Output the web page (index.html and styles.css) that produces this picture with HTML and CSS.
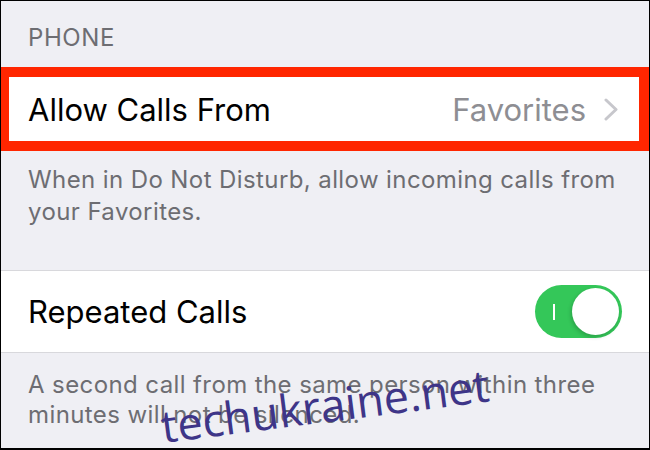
FILE: index.html
```html
<!DOCTYPE html>
<html>
<head>
<meta charset="utf-8">
<link rel="stylesheet" href="styles.css">
</head>
<body>
<div class="screen">
  <div class="section-header">PHONE</div>
  <div class="cell highlight">
    <span class="cell-title">Allow Calls From</span>
    <span class="cell-value">Favorites</span>
    <svg class="chevron" width="14" height="23" viewBox="0 0 14 23"><path d="M2 2 L12 11.5 L2 21" fill="none" stroke="#c7c7cc" stroke-width="3" stroke-linecap="round" stroke-linejoin="round"/></svg>
  </div>
  <div class="section-footer first">When in Do Not Disturb, allow incoming calls from your Favorites.</div>
  <div class="cell plain">
    <span class="cell-title">Repeated Calls</span>
    <div class="toggle on"><span class="toggle-mark"></span><span class="knob"></span></div>
  </div>
  <div class="section-footer second">A second call from the same person within three minutes will not be silenced.</div>
  <div class="watermark">techukraine.net</div>
</div>
</body>
</html>
```

FILE: styles.css
```css
html, body {
  margin: 0;
  padding: 0;
  background: #efeff4;
}
.screen {
  position: relative;
  width: 650px;
  height: 450px;
  box-sizing: border-box;
  border: 1px solid #000;
  border-bottom-width: 2px;
  background: #efeff4;
  overflow: hidden;
  font-family: Inter, "Liberation Sans", sans-serif;
}
.section-header {
  height: 66px;
  box-sizing: border-box;
  padding: 23px 27px 0;
  font-size: 24px;
  letter-spacing: 0.6px;
  line-height: 28px;
  color: #6d6d72;
}
.cell {
  display: flex;
  align-items: center;
  background: #fff;
  font-size: 31px;
  color: #000;
}
.highlight {
  margin: 0 -1px;
  height: 84px;
  box-sizing: border-box;
  border: 10px solid #ff2600;
  border-left-width: 9px;
  border-right-width: 11px;
  padding: 0 21px 0 19px;
}
.cell-title {
  flex: 1;
}
.cell-value {
  color: #8e8e93;
  margin-right: 18px;
}
.chevron {
  display: block;
}
.section-footer {
  box-sizing: border-box;
  padding: 0 27px;
  font-size: 24px;
  letter-spacing: 0.4px;
  line-height: 32px;
  color: #6d6d72;
}
.section-footer.first {
  height: 119px;
  padding-top: 13px;
}
.plain {
  height: 83px;
  box-sizing: border-box;
  border-top: 1px solid #d8d8dc;
  border-bottom: 1px solid #d8d8dc;
  padding: 0 27px;
}
.section-footer.second {
  padding-top: 17px;
  line-height: 30px;
}
.toggle {
  position: relative;
  width: 87px;
  height: 53px;
  border-radius: 27px;
  background: #34c759;
}
.toggle-mark {
  position: absolute;
  left: 18px;
  top: 19px;
  width: 2px;
  height: 16px;
  background: #fff;
}
.knob {
  position: absolute;
  right: 3px;
  top: 3px;
  width: 47px;
  height: 47px;
  border-radius: 50%;
  background: #fff;
  box-shadow: -1px 2px 4px rgba(0,0,0,0.2);
}
.watermark {
  position: absolute;
  left: 164px;
  top: 395px;
  font-family: "Open Sans", sans-serif;
  font-size: 45px;
  line-height: 60px;
  color: #3e3588;
  transform: rotate(-7.3deg);
  transform-origin: 0 100%;
  white-space: nowrap;
}
```
